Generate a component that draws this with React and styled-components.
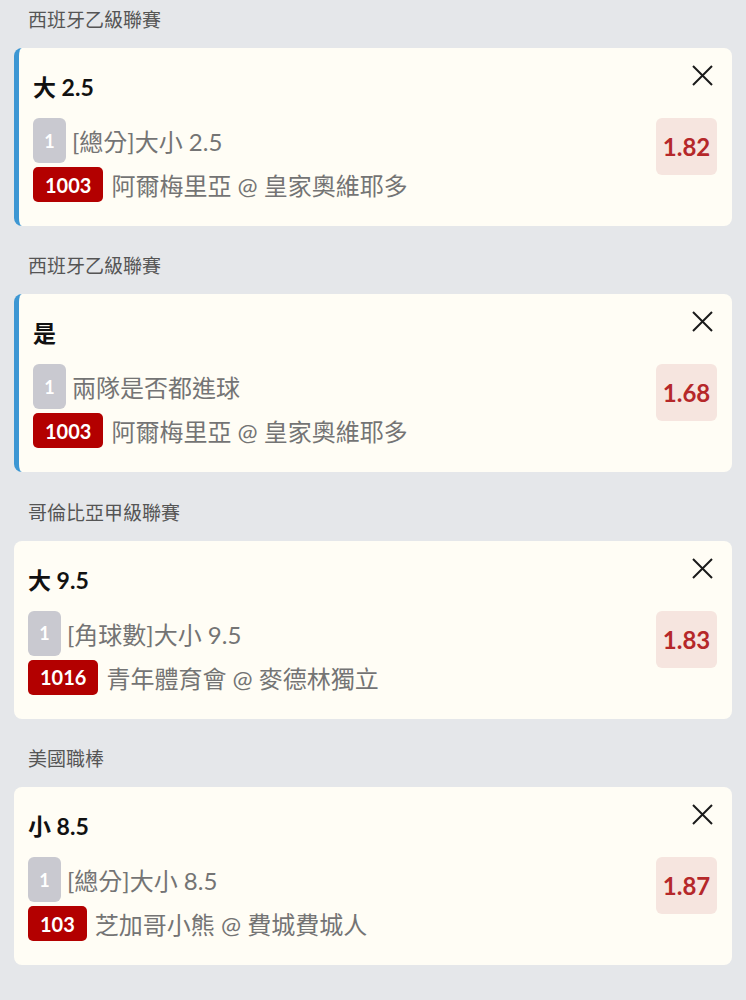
import React from 'react';
import styled, {createGlobalStyle} from 'styled-components';

const COLORS = {
	PAGE_BG: '#e5e7ea',
	CARD_BG: '#fffdf5',
	ACCENT: '#3d97d3',
	LABEL: '#555555',
	MUTED: '#747474',
	BADGE_GREY: '#c9c9d0',
	BADGE_RED: '#b30000',
	ODDS_BG: '#f6e5df',
	ODDS_TEXT: '#b5282a'
};

const FONT = `Lato, "Noto Sans CJK TC", "Noto Sans", sans-serif`;

const GlobalStyle = createGlobalStyle`
	html, body {
		margin: 0;
		padding: 0;
		background: ${COLORS.PAGE_BG};
		font-family: ${FONT};
	}
`;

const Page = styled.div`
	display: flex;
	flex-direction: column;
	gap: 28.4px;
	padding: 8px 14px 40px;
	min-height: 1000px;
	box-sizing: border-box;
`;

const Section = styled.section`
	display: flex;
	flex-direction: column;
	gap: 16px;
`;

const LeagueName = styled.div`
	padding-left: 14px;
	font-size: 19px;
	line-height: 24px;
	color: ${COLORS.LABEL};
`;

const Card = styled.div`
	display: flex;
	flex-direction: column;
	background: ${COLORS.CARD_BG};
	border-radius: 8px;
	border-left: ${(props) => (props.selected ? `5px solid ${COLORS.ACCENT}` : 'none')};
	padding: 17px 15px 24px 14px;
	height: 178px;
	box-sizing: border-box;
`;

const CardHeader = styled.div`
	display: flex;
	justify-content: space-between;
	align-items: flex-start;
`;

const Title = styled.div`
	margin-top: 8px;
	font-size: 23px;
	line-height: 28px;
	font-weight: 700;
	color: #111;
`;

const CloseButton = styled.button`
	display: flex;
	width: 21px;
	height: 21px;
	margin-right: 4px;
	padding: 0;
	border: none;
	background: none;
	cursor: pointer;
`;

const CardBody = styled.div`
	display: flex;
	justify-content: space-between;
	align-items: flex-start;
	margin-top: 17px;
`;

const Info = styled.div`
	display: flex;
	flex-direction: column;
	gap: 4px;
`;

const Row = styled.div`
	display: flex;
	align-items: center;
	gap: ${(props) => props.gap || 8}px;
	font-size: 24px;
	color: ${COLORS.MUTED};
	white-space: nowrap;
`;

const LegBadge = styled.span`
	display: flex;
	align-items: center;
	justify-content: center;
	width: 33px;
	height: 45px;
	border-radius: 6px;
	background: ${COLORS.BADGE_GREY};
	color: #fff;
	font-size: 18px;
	font-weight: 700;
`;

const CodeBadge = styled.span`
	display: flex;
	align-items: center;
	height: 35px;
	padding: 0 12px;
	border-radius: 5px;
	background: ${COLORS.BADGE_RED};
	color: #fff;
	font-size: 20px;
	font-weight: 700;
`;

const Odds = styled.div`
	display: flex;
	align-items: center;
	justify-content: center;
	width: 61px;
	height: 57px;
	border-radius: 6px;
	background: ${COLORS.ODDS_BG};
	color: ${COLORS.ODDS_TEXT};
	font-size: 24px;
	font-weight: 700;
`;

const CloseIcon = () => (
	<svg width="21" height="21" viewBox="0 0 21 21" fill="none" stroke="#1a1a1a" strokeWidth="2">
		<path d="M1 1L20 20M20 1L1 20" />
	</svg>
);

const bets = [
	{league: '西班牙乙級聯賽', title: '大 2.5', market: '[總分]大小 2.5', code: '1003', match: '阿爾梅里亞 @ 皇家奧維耶多', odds: '1.82', selected: true},
	{league: '西班牙乙級聯賽', title: '是', market: '兩隊是否都進球', code: '1003', match: '阿爾梅里亞 @ 皇家奧維耶多', odds: '1.68', selected: true},
	{league: '哥倫比亞甲級聯賽', title: '大 9.5', market: '[角球數]大小 9.5', code: '1016', match: '青年體育會 @ 麥德林獨立', odds: '1.83'},
	{league: '美國職棒', title: '小 8.5', market: '[總分]大小 8.5', code: '103', match: '芝加哥小熊 @ 費城費城人', odds: '1.87'}
];

export default function App() {
	return (
		<>
			<GlobalStyle />
			<Page>
				{bets.map((bet, i) => (
					<Section key={i}>
						<LeagueName>{bet.league}</LeagueName>
						<Card selected={bet.selected}>
							<CardHeader>
								<Title>{bet.title}</Title>
								<CloseButton aria-label="close">
									<CloseIcon />
								</CloseButton>
							</CardHeader>
							<CardBody>
								<Info>
									<Row gap={6}>
										<LegBadge>1</LegBadge>
										<span>{bet.market}</span>
									</Row>
									<Row>
										<CodeBadge>{bet.code}</CodeBadge>
										<span>{bet.match}</span>
									</Row>
								</Info>
								<Odds>{bet.odds}</Odds>
							</CardBody>
						</Card>
					</Section>
				))}
			</Page>
		</>
	);
}
